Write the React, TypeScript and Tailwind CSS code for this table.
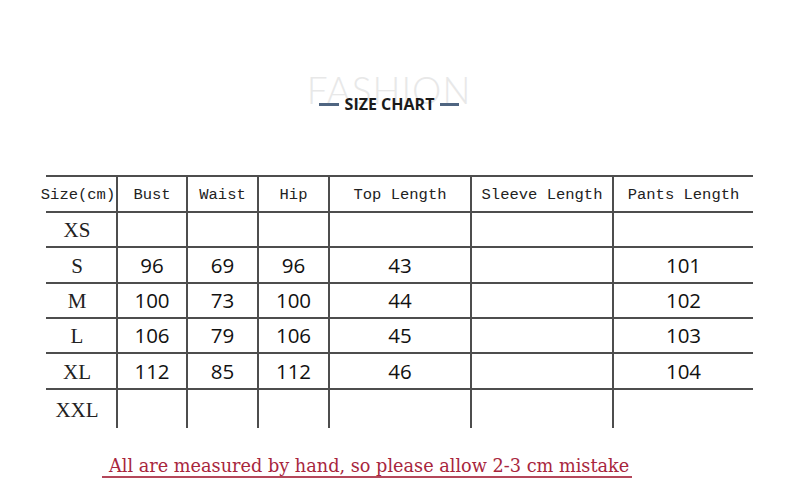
import React from 'react';

const cols = ['Bust', 'Waist', 'Hip', 'Top Length', 'Sleeve Length', 'Pants Length'];

const rows: { size: string; values: string[]; h: string }[] = [
  { size: 'XS', values: ['', '', '', '', '', ''], h: 'h-[35px]' },
  { size: 'S', values: ['96', '69', '96', '43', '', '101'], h: 'h-[36px]' },
  { size: 'M', values: ['100', '73', '100', '44', '', '102'], h: 'h-[35px]' },
  { size: 'L', values: ['106', '79', '106', '45', '', '103'], h: 'h-[35px]' },
  { size: 'XL', values: ['112', '85', '112', '46', '', '104'], h: 'h-[36px]' },
  { size: 'XXL', values: ['', '', '', '', '', ''], h: 'h-[40px]' },
];

export default function App() {
  return (
    <div className="w-[800px] h-[500px] bg-white overflow-hidden">
      {/* title */}
      <div className="h-[175px] flex justify-center pr-[22px] pt-[70px]">
        <div className="flex flex-col items-center">
          <span className="font-['Lato',sans-serif] font-light text-[37px] leading-[40px] tracking-[1px] text-[#e8e8e8]">
            FASHION
          </span>
          <div className="-mt-[16px] h-5 flex items-center gap-[6px]">
            <span className="w-[20px] h-[3px] bg-[#4f6581]" />
            <span className="font-['Open_Sans',sans-serif] font-bold text-[16px] leading-5 text-[#1a1a1a]">
              SIZE CHART
            </span>
            <span className="w-[19px] h-[3px] bg-[#4f6581]" />
          </div>
        </div>
      </div>

      {/* table */}
      <div className="ml-[46px] w-[707px] grid grid-cols-[70px_70px_71px_71px_142px_142px_141px]">
        <div className="h-[36px] border-t-2 border-[#4d4d4d] flex items-center justify-center pt-[3px]">
          <span className="-ml-[6px] whitespace-nowrap font-['Liberation_Mono',monospace] text-[15.5px] text-[#222]">
            Size(cm)
          </span>
        </div>
        {cols.map((c) => (
          <div
            key={c}
            className="h-[36px] border-t-2 border-l-2 border-[#4d4d4d] flex items-center justify-center pt-[3px]"
          >
            <span className="whitespace-nowrap font-['Liberation_Mono',monospace] text-[15.5px] text-[#222]">
              {c}
            </span>
          </div>
        ))}
        {rows.map((r) => (
          <React.Fragment key={r.size}>
            <div className={`${r.h} border-t-2 border-[#4d4d4d] flex items-center justify-center pr-[8px]`}>
              <span className="font-['Liberation_Serif',serif] text-[21px] text-[#222] pt-[3px]">
                {r.size}
              </span>
            </div>
            {r.values.map((v, i) => (
              <div
                key={i}
                className={`${r.h} border-t-2 border-l-2 border-[#4d4d4d] flex items-center justify-center`}
              >
                <span className="font-['Open_Sans',sans-serif] text-[20.5px] text-[#111]">{v}</span>
              </div>
            ))}
          </React.Fragment>
        ))}
      </div>

      {/* note */}
      <div className="mt-[26px] ml-[102px]">
        <span className="inline-block pl-[7px] pr-[3px] border-b-2 border-[#b4475a] font-['DejaVu_Serif',serif] text-[17.7px] leading-[20px] text-[#a8263d]">
          All are measured by hand, so please allow 2-3 cm mistake
        </span>
      </div>
    </div>
  );
}
